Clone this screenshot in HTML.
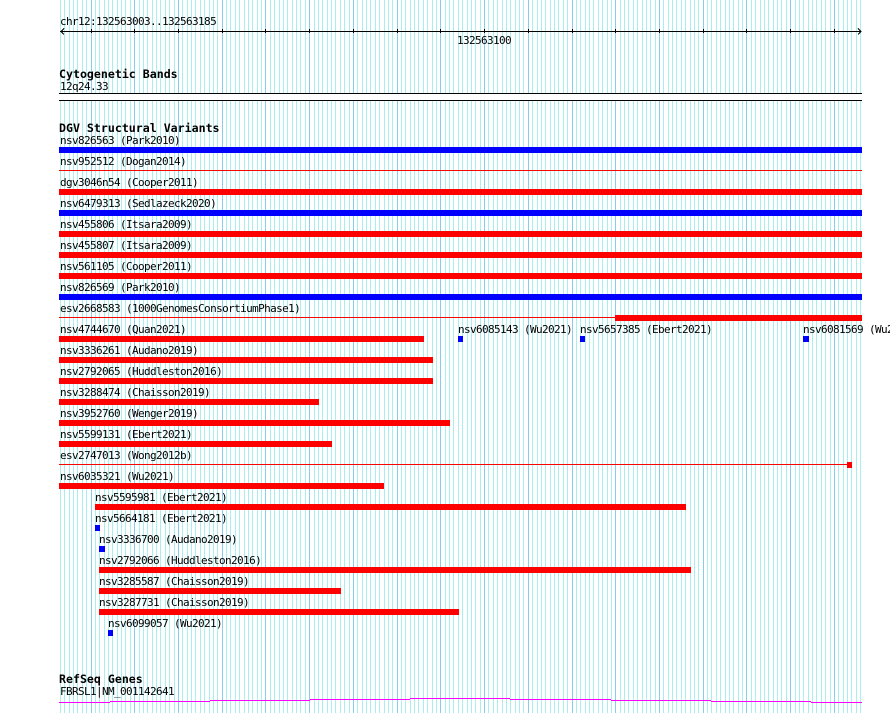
<!DOCTYPE html>
<html>
<head>
<meta charset="utf-8">
<style>
html,body{margin:0;padding:0;background:#fff;width:890px;height:713px;overflow:hidden}
svg{display:block;position:absolute;left:0;top:0}
text{font-family:"DejaVu Sans Mono","Liberation Mono",monospace;font-size:11px;letter-spacing:-0.62px;fill:#000;white-space:pre}
text.b{font-size:11.6px;letter-spacing:0;font-weight:bold}
</style>
</head>
<body>
<svg width="890" height="713" viewBox="0 0 890 713" xmlns="http://www.w3.org/2000/svg">
<g shape-rendering="crispEdges" transform="translate(.5 0)" stroke-width="1" fill="none">
<path stroke="#aaeeee" d="M60 0V713M64 0V713M69 0V713M73 0V713M77 0V713M82 0V713M86 0V713M95 0V713M99 0V713M104 0V713M108 0V713M112 0V713M117 0V713M121 0V713M125 0V713M130 0V713M139 0V713M143 0V713M147 0V713M152 0V713M156 0V713M160 0V713M165 0V713M169 0V713M174 0V713M182 0V713M187 0V713M191 0V713M195 0V713M200 0V713M204 0V713M209 0V713M213 0V713M217 0V713M226 0V713M230 0V713M235 0V713M239 0V713M244 0V713M248 0V713M252 0V713M257 0V713M261 0V713M270 0V713M274 0V713M279 0V713M283 0V713M287 0V713M292 0V713M296 0V713M300 0V713M305 0V713M314 0V713M318 0V713M322 0V713M327 0V713M331 0V713M335 0V713M340 0V713M344 0V713M349 0V713M357 0V713M362 0V713M366 0V713M370 0V713M375 0V713M379 0V713M384 0V713M388 0V713M392 0V713M401 0V713M405 0V713M410 0V713M414 0V713M418 0V713M423 0V713M427 0V713M432 0V713M436 0V713M445 0V713M449 0V713M453 0V713M458 0V713M462 0V713M467 0V713M471 0V713M475 0V713M480 0V713M488 0V713M493 0V713M497 0V713M502 0V713M506 0V713M510 0V713M515 0V713M519 0V713M523 0V713M532 0V713M537 0V713M541 0V713M545 0V713M550 0V713M554 0V713M558 0V713M563 0V713M567 0V713M576 0V713M580 0V713M585 0V713M589 0V713M593 0V713M598 0V713M602 0V713M607 0V713M611 0V713M620 0V713M624 0V713M628 0V713M633 0V713M637 0V713M642 0V713M646 0V713M650 0V713M655 0V713M663 0V713M668 0V713M672 0V713M676 0V713M681 0V713M685 0V713M690 0V713M694 0V713M698 0V713M707 0V713M711 0V713M716 0V713M720 0V713M725 0V713M729 0V713M733 0V713M738 0V713M742 0V713M751 0V713M755 0V713M760 0V713M764 0V713M768 0V713M773 0V713M777 0V713M781 0V713M786 0V713M795 0V713M799 0V713M803 0V713M808 0V713M812 0V713M816 0V713M821 0V713M825 0V713M830 0V713M838 0V713M843 0V713M847 0V713M851 0V713M856 0V713M860 0V713"/>
<path stroke="#88ccee" d="M91 0V713M134 0V713M178 0V713M222 0V713M265 0V713M309 0V713M353 0V713M397 0V713M440 0V713M484 0V713M528 0V713M572 0V713M615 0V713M659 0V713M703 0V713M746 0V713M790 0V713M834 0V713"/>
</g>
<g shape-rendering="crispEdges">
<!-- ruler -->
<rect x="60" y="31" width="801" height="1" fill="#000"/>
<path fill="none" stroke="#000" stroke-width="1" d="M91.5 29V33M134.5 29V33M178.5 29V33M222.5 29V33M265.5 29V33M309.5 29V33M353.5 29V33M397.5 29V33M440.5 29V33M484.5 29V33M528.5 29V33M572.5 29V33M615.5 29V33M659.5 29V33M703.5 29V33M746.5 29V33M790.5 29V33M834.5 29V33"/>
<path fill="none" stroke="#000" stroke-width="1" d="M64 28.5L61 31.5L64 34.5M858 28.5L861 31.5L858 34.5"/>
<!-- cytogenetic band -->
<rect x="59" y="94" width="803" height="6" fill="#fff"/>
<rect x="59" y="93" width="803" height="1" fill="#000"/>
<rect x="59" y="100" width="803" height="1" fill="#000"/>
<!-- blue full bars -->
<rect x="59" y="147" width="803" height="6" fill="#0000ff"/>
<rect x="59" y="210" width="803" height="6" fill="#0000ff"/>
<rect x="59" y="294" width="803" height="6" fill="#0000ff"/>
<!-- red -->
<rect x="59" y="170" width="803" height="1" fill="#ff0000"/>
<rect x="59" y="189" width="803" height="6" fill="#ff0000"/>
<rect x="59" y="231" width="803" height="6" fill="#ff0000"/>
<rect x="59" y="252" width="803" height="6" fill="#ff0000"/>
<rect x="59" y="273" width="803" height="6" fill="#ff0000"/>
<rect x="59" y="317" width="556" height="1" fill="#ff0000"/>
<rect x="615" y="315" width="247" height="6" fill="#ff0000"/>
<rect x="59" y="336" width="365" height="6" fill="#ff0000"/>
<rect x="458" y="336" width="5" height="6" fill="#0000ff"/>
<rect x="580" y="336" width="5" height="6" fill="#0000ff"/>
<rect x="803" y="336" width="6" height="6" fill="#0000ff"/>
<rect x="59" y="357" width="374" height="6" fill="#ff0000"/>
<rect x="59" y="378" width="374" height="6" fill="#ff0000"/>
<rect x="59" y="399" width="260" height="6" fill="#ff0000"/>
<rect x="59" y="420" width="391" height="6" fill="#ff0000"/>
<rect x="59" y="441" width="273" height="6" fill="#ff0000"/>
<rect x="59" y="464" width="788" height="1" fill="#ff0000"/>
<rect x="847" y="462" width="5" height="6" fill="#ff0000"/>
<rect x="59" y="483" width="325" height="6" fill="#ff0000"/>
<rect x="95" y="504" width="591" height="6" fill="#ff0000"/>
<rect x="95" y="525" width="5" height="6" fill="#0000ff"/>
<rect x="99" y="546" width="6" height="6" fill="#0000ff"/>
<rect x="99" y="567" width="592" height="6" fill="#ff0000"/>
<rect x="99" y="588" width="242" height="6" fill="#ff0000"/>
<rect x="99" y="609" width="360" height="6" fill="#ff0000"/>
<rect x="108" y="630" width="5" height="6" fill="#0000ff"/>
<!-- gene -->
<path fill="none" stroke="#ff00ff" stroke-width="1" d="M59 702.5H110M110 701.5H210M210 700.5H310M310 699.5H410M410 698.5H510M510 699.5H611M611 700.5H711M711 701.5H811M811 702.5H862"/>
</g>
<text x="60" y="25">chr12:132563003..132563185</text>
<text x="457" y="44">132563100</text>
<text class="b" x="59" y="78">Cytogenetic Bands</text>
<text x="60" y="90">12q24.33</text>
<text class="b" x="59" y="132">DGV Structural Variants</text>
<text x="60" y="144">nsv826563 (Park2010)</text>
<text x="60" y="165">nsv952512 (Dogan2014)</text>
<text x="60" y="186">dgv3046n54 (Cooper2011)</text>
<text x="60" y="207">nsv6479313 (Sedlazeck2020)</text>
<text x="60" y="228">nsv455806 (Itsara2009)</text>
<text x="60" y="249">nsv455807 (Itsara2009)</text>
<text x="60" y="270">nsv561105 (Cooper2011)</text>
<text x="60" y="291">nsv826569 (Park2010)</text>
<text x="60" y="312">esv2668583 (1000GenomesConsortiumPhase1)</text>
<text x="60" y="333">nsv4744670 (Quan2021)</text>
<text x="458" y="333">nsv6085143 (Wu2021)</text>
<text x="580" y="333">nsv5657385 (Ebert2021)</text>
<text x="803" y="333">nsv6081569 (Wu2021)</text>
<text x="60" y="354">nsv3336261 (Audano2019)</text>
<text x="60" y="375">nsv2792065 (Huddleston2016)</text>
<text x="60" y="396">nsv3288474 (Chaisson2019)</text>
<text x="60" y="417">nsv3952760 (Wenger2019)</text>
<text x="60" y="438">nsv5599131 (Ebert2021)</text>
<text x="60" y="459">esv2747013 (Wong2012b)</text>
<text x="60" y="480">nsv6035321 (Wu2021)</text>
<text x="95" y="501">nsv5595981 (Ebert2021)</text>
<text x="95" y="522">nsv5664181 (Ebert2021)</text>
<text x="99" y="543">nsv3336700 (Audano2019)</text>
<text x="99" y="564">nsv2792066 (Huddleston2016)</text>
<text x="99" y="585">nsv3285587 (Chaisson2019)</text>
<text x="99" y="606">nsv3287731 (Chaisson2019)</text>
<text x="108" y="627">nsv6099057 (Wu2021)</text>
<text class="b" x="59" y="683">RefSeq Genes</text>
<text x="60" y="695">FBRSL1|NM_001142641</text>
</svg>
</body>
</html>
